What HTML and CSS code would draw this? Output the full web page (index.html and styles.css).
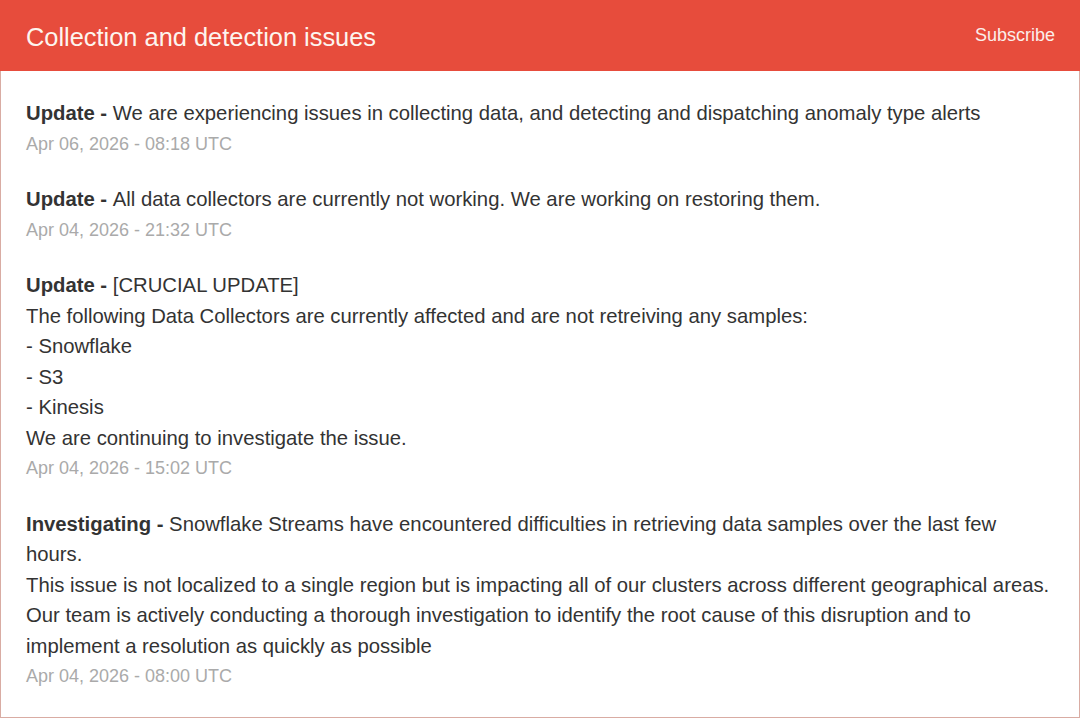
FILE: index.html
```html
<!DOCTYPE html>
<html lang="en">
<head>
<meta charset="utf-8">
<title>Collection and detection issues</title>
<link rel="stylesheet" href="styles.css">
</head>
<body>
<div class="page">
  <header class="header">
    <h1 class="title">Collection and detection issues</h1>
    <a class="subscribe" href="#">Subscribe</a>
  </header>
  <main class="updates">
    <div class="update">
      <div class="body"><strong>Update - </strong>We are experiencing issues in collecting data, and detecting and dispatching anomaly type alerts</div>
      <div class="date">Apr 06, 2026 - 08:18 UTC</div>
    </div>
    <div class="update">
      <div class="body"><strong>Update - </strong>All data collectors are currently not working. We are working on restoring them.</div>
      <div class="date">Apr 04, 2026 - 21:32 UTC</div>
    </div>
    <div class="update">
      <div class="body"><strong>Update - </strong>[CRUCIAL UPDATE]<br>The following Data Collectors are currently affected and are not retreiving any samples:<br>- Snowflake<br>- S3<br>- Kinesis<br>We are continuing to investigate the issue.</div>
      <div class="date">Apr 04, 2026 - 15:02 UTC</div>
    </div>
    <div class="update">
      <div class="body"><strong>Investigating - </strong>Snowflake Streams have encountered difficulties in retrieving data samples over the last few hours.<br>This issue is not localized to a single region but is impacting all of our clusters across different geographical areas. Our team is actively conducting a thorough investigation to identify the root cause of this disruption and to implement a resolution as quickly as possible</div>
      <div class="date">Apr 04, 2026 - 08:00 UTC</div>
    </div>
  </main>
</div>
</body>
</html>
```
FILE: styles.css
```css
html, body {
  margin: 0;
  padding: 0;
  background: #ffffff;
}
body {
  font-family: "Liberation Sans", Arial, sans-serif;
  color: #333333;
}
.page {
  width: 1080px;
  height: 718px;
  box-sizing: border-box;
  display: flex;
  flex-direction: column;
}
.header {
  background: #e74c3c;
  height: 71px;
  flex: none;
  display: flex;
  align-items: center;
  justify-content: space-between;
  padding: 0 25px 0 26px;
}
.title {
  margin: 0;
  font-size: 25.4px;
  font-weight: normal;
  color: #fdf5ef;
  position: relative;
  top: 2px;
}
.subscribe {
  color: #fbeeea;
  text-decoration: none;
  font-size: 18px;
  position: relative;
  top: 0px;
}
.updates {
  flex: 1;
  border: 1px solid #d9aca3;
  border-top: none;
  padding: 27px 24px 0 25px;
  display: flex;
  flex-direction: column;
  gap: 25px;
}
.body {
  font-size: 20.3px;
  line-height: 30.5px;
}
.body strong {
  font-weight: bold;
}
.date {
  font-size: 18px;
  line-height: 30.5px;
  color: #aaaaaa;
}
```
